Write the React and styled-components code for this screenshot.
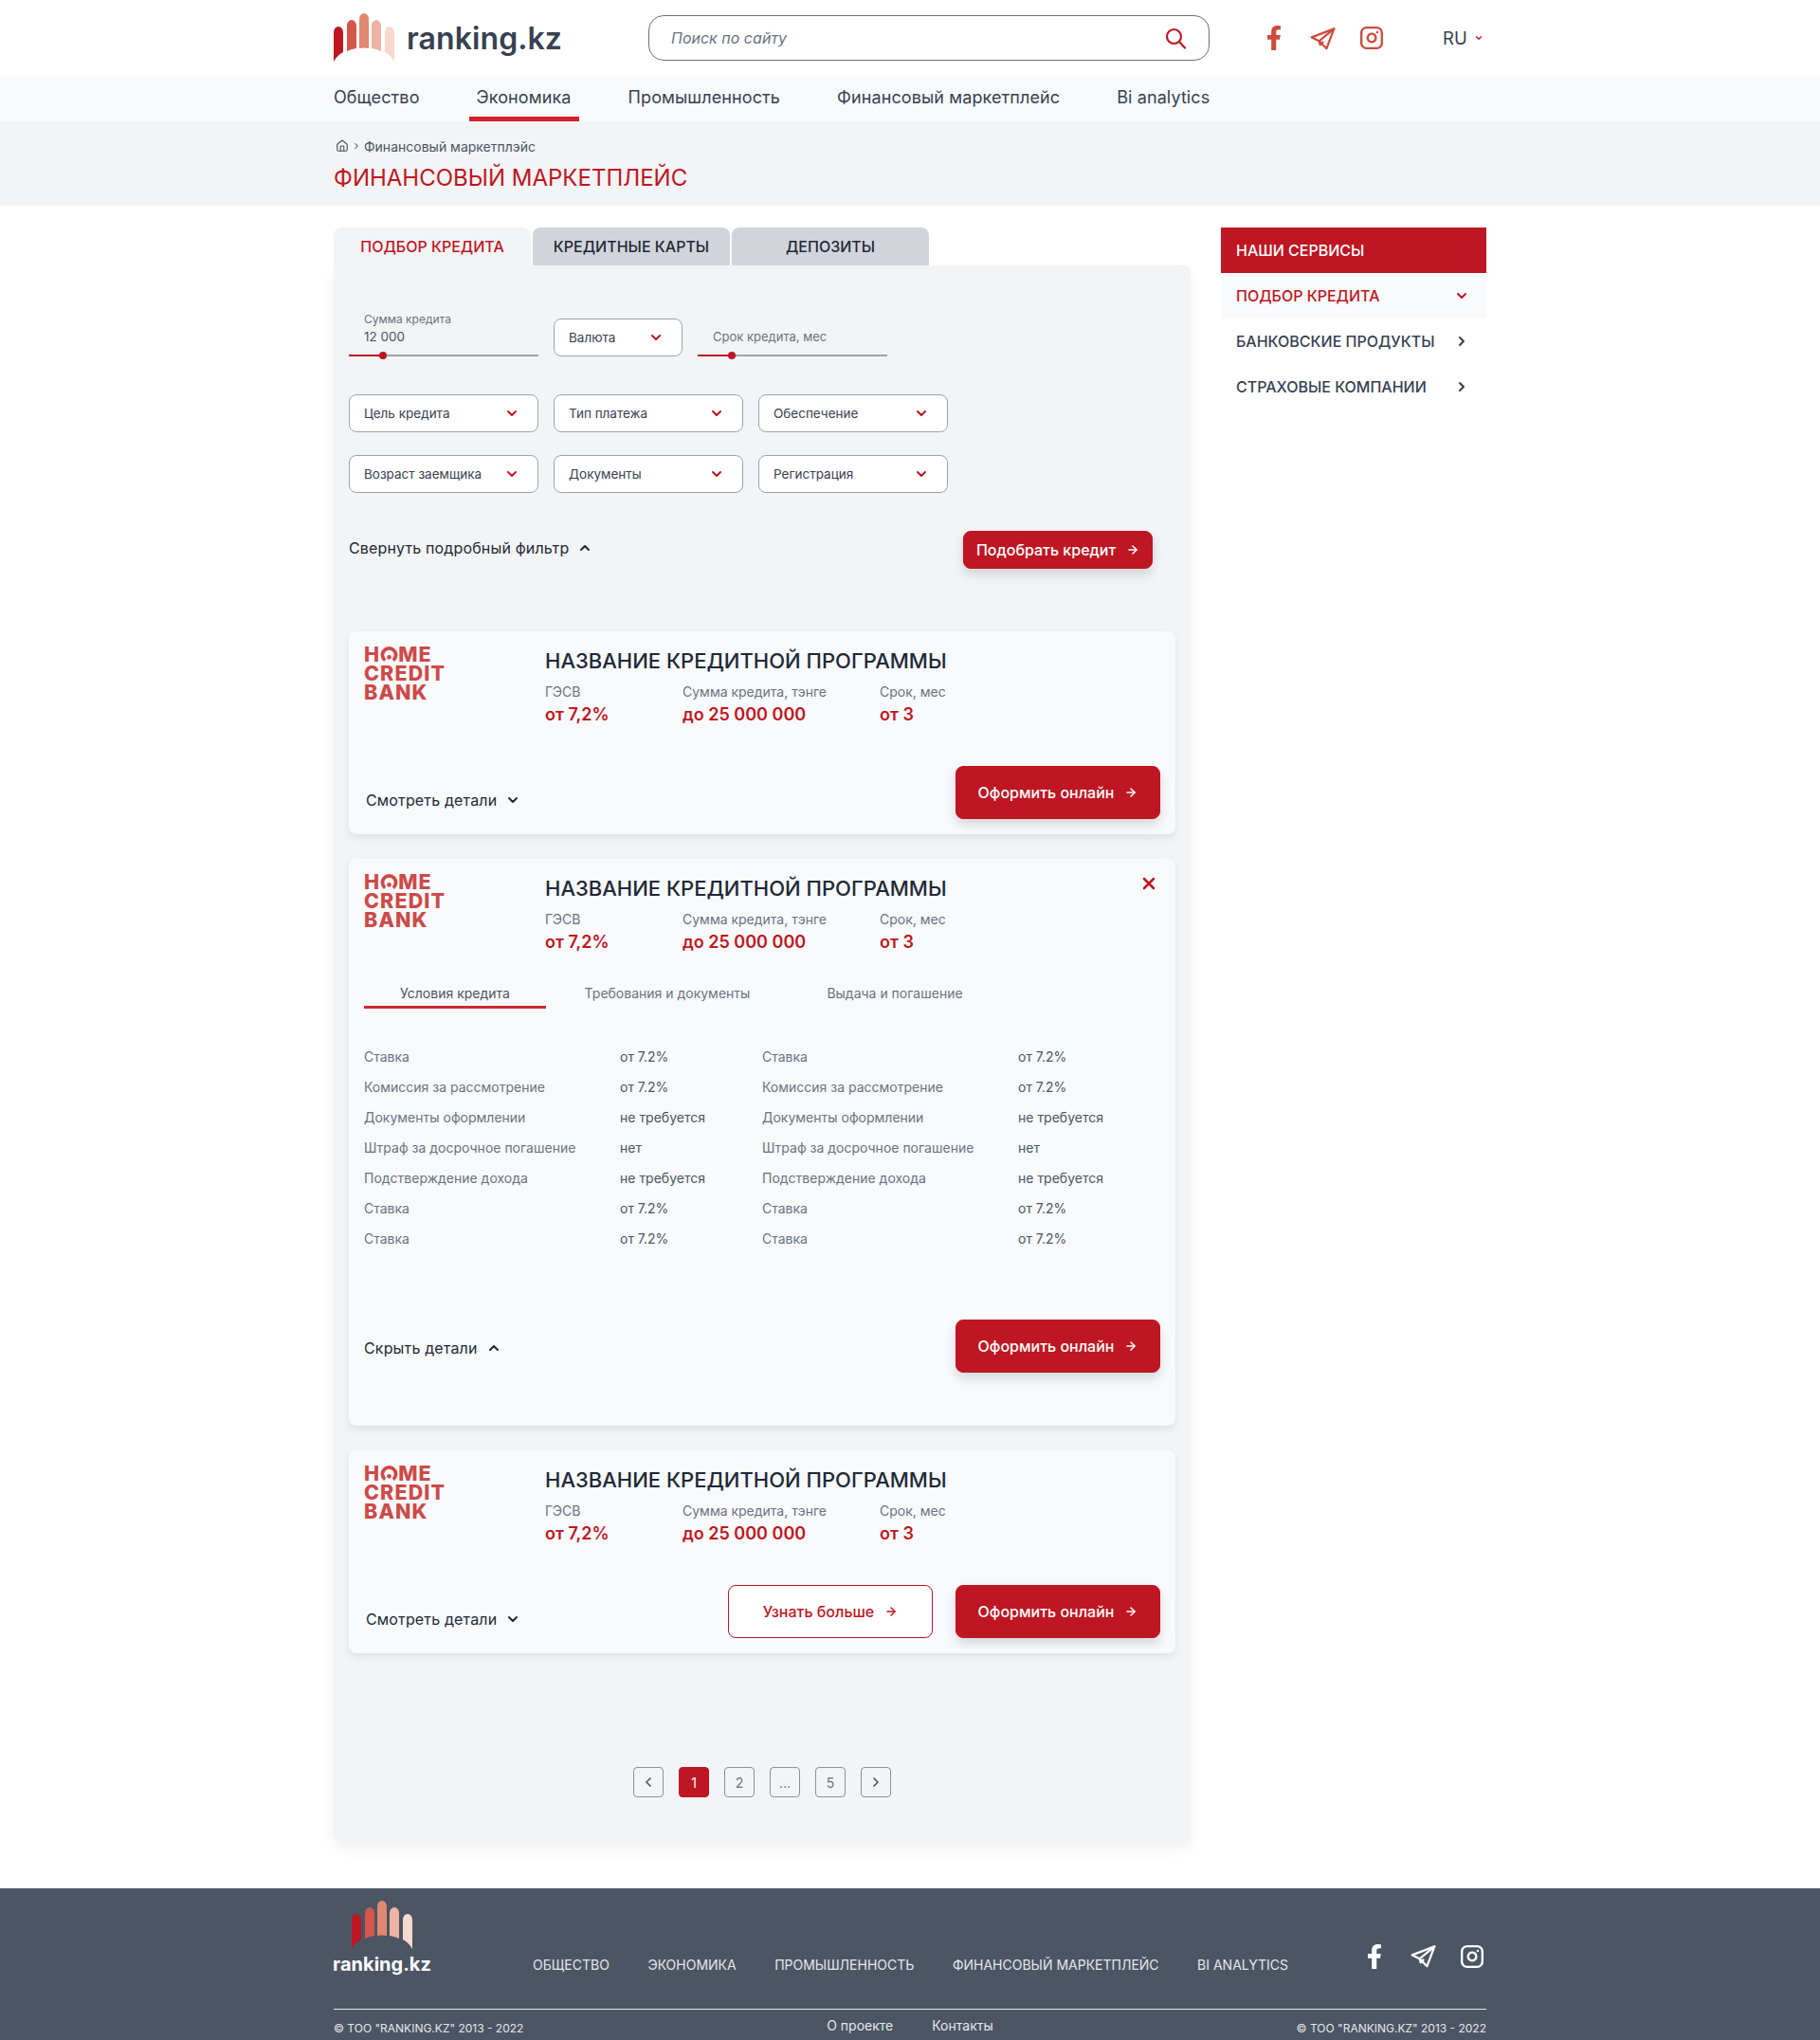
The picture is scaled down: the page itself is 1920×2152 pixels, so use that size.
import React from 'react'
import styled, { createGlobalStyle } from 'styled-components'
import { ArrowRight, ChevronDown, ChevronLeft, ChevronRight, ChevronUp, House, Instagram, X } from 'lucide-react'
import { FaFacebookF } from 'react-icons/fa'

const RED = '#be1622'

const GlobalStyle = createGlobalStyle`
  body {
    margin: 0;
    background: #fff;
    color: #374151;
    font-family: Inter, "Noto Sans", sans-serif;
  }
`

const Container = styled.div`
  width: 1216px;
  margin: 0 auto;
`

const HeaderBar = styled(Container)`
  display: flex;
  align-items: center;
  height: 80px;
`

const Brand = styled.div`
  display: flex;
  align-items: center;
  gap: 13px;
  width: 332px;
  font-size: 32px;
  font-weight: 600;
  letter-spacing: 0.1px;
  color: #374151;
`

const SearchBox = styled.div`
  display: flex;
  align-items: center;
  justify-content: space-between;
  box-sizing: border-box;
  width: 592px;
  height: 48px;
  padding: 0 23px;
  border: 1px solid #6b7280;
  border-radius: 16px;
  font-size: 16px;
  font-style: italic;
  color: #6b7280;
  svg {
    color: ${RED};
  }
`

const Socials = styled.div`
  display: flex;
  align-items: center;
  gap: 25px;
  margin-left: ${p => p.$offset}px;
  color: ${p => p.$color};
`

const Lang = styled.div`
  display: flex;
  align-items: center;
  gap: 7px;
  margin-left: 62px;
  font-size: 18.5px;
  svg {
    color: ${RED};
  }
`

const NavBand = styled.nav`
  height: 48px;
  background: #f8fafc;
`

const NavRow = styled(Container)`
  display: flex;
  gap: 44px;
  position: relative;
  left: -8px;
`

const NavItem = styled.a`
  box-sizing: border-box;
  height: 48px;
  padding: 0 8px;
  font-size: 18px;
  line-height: 46px;
  letter-spacing: 0.1px;
  color: #374151;
  border-bottom: 5px solid ${p => (p.$active ? '#d6202c' : 'transparent')};
`

const TitleBand = styled.div`
  height: 89px;
  background: #f3f4f6;
`

const Crumbs = styled.div`
  display: flex;
  align-items: center;
  gap: 3px;
  padding: 17px 0 0 2px;
  height: 18px;
  font-size: 14px;
  color: #4b5563;
`

const PageTitle = styled.h1`
  margin: 9px 0 0;
  font-size: 24px;
  line-height: 32px;
  font-weight: 400;
  color: ${RED};
  text-transform: uppercase;
`

const Main = styled(Container)`
  display: flex;
  gap: 32px;
  padding-top: 23px;
`

const LeftColumn = styled.div`
  width: 904px;
`

const Tabs = styled.div`
  display: flex;
  gap: 2px;
`

const Tab = styled.div`
  width: 208px;
  height: 40px;
  border-radius: 8px 8px 0 0;
  background: ${p => (p.$active ? '#f3f4f6' : '#d1d5db')};
  color: ${p => (p.$active ? RED : '#1f2937')};
  font-size: 16px;
  font-weight: 500;
  line-height: 40px;
  text-align: center;
`

const Panel = styled.section`
  box-sizing: border-box;
  height: 1662px;
  padding: 56px 16px 0;
  background: #f3f4f6;
  border-radius: 0 8px 8px 8px;
  box-shadow: 0 8px 16px rgba(0, 0, 0, 0.06);
`

const FilterRow = styled.div`
  display: flex;
  gap: 16px;
  height: 40px;
  margin-bottom: ${p => p.$after}px;
`

const SliderBox = styled.div`
  display: flex;
  flex-direction: column;
  justify-content: flex-end;
  width: 200px;
  height: 40px;
  & > * {
    flex-shrink: 0;
  }
`

const SliderLabel = styled.div`
  padding-left: 16px;
  font-size: 12px;
  line-height: 16px;
  color: #6b7280;
`

const SliderValue = styled.div`
  margin-bottom: 9px;
  padding-left: 16px;
  font-size: ${p => (p.$muted ? 13 : 13.500)}px;
  line-height: 20px;
  color: ${p => (p.$muted ? '#6b7280' : '#4b5563')};
`

const Track = styled.div`
  position: relative;
  height: 2px;
  background: #9ca3af;
`

const TrackFill = styled.div`
  height: 100%;
  background: ${RED};
`

const Thumb = styled.div`
  position: absolute;
  top: -3px;
  width: 8px;
  height: 8px;
  border-radius: 50%;
  background: ${RED};
`

const Select = styled.div`
  display: flex;
  align-items: center;
  justify-content: space-between;
  box-sizing: border-box;
  width: ${p => p.$width || 200}px;
  height: 40px;
  padding: 0 19px 0 15px;
  background: #fff;
  border: 1px solid #9ca3af;
  border-radius: 8px;
  font-size: 13.500px;
  color: #374151;
  svg {
    color: ${RED};
  }
`

const ActionRow = styled.div`
  display: flex;
  align-items: center;
  justify-content: space-between;
  height: 40px;
  padding-right: 24px;
`

const Toggle = styled.div`
  display: flex;
  align-items: center;
  gap: 9px;
  padding-top: ${p => p.$shift || 0}px;
  padding-bottom: ${p => p.$lift || 0}px;
  padding-left: ${p => p.$inset || 0}px;
  font-size: 16px;
  letter-spacing: 0.15px;
  color: #1f2937;
`

const Button = styled.div`
  display: flex;
  align-items: center;
  justify-content: center;
  gap: 11px;
  box-sizing: border-box;
  width: ${p => (p.$small ? 200 : 216)}px;
  height: ${p => (p.$small ? 40 : 56)}px;
  border: 1px solid ${RED};
  border-radius: 8px;
  background: ${p => (p.$outline ? '#fff' : RED)};
  color: ${p => (p.$outline ? RED : '#fff')};
  font-size: 16px;
  font-weight: 500;
  box-shadow: ${p => (p.$outline ? 'none' : '0 6px 12px rgba(0, 0, 0, 0.14)')};
`

const CardList = styled.div`
  display: flex;
  flex-direction: column;
  gap: 26px;
  margin-top: 66px;
`

const Card = styled.article`
  position: relative;
  background: #f8fafc;
  border-radius: 8px;
  box-shadow: 0 4px 8px rgba(0, 0, 0, 0.08);
`

const CardHead = styled.div`
  display: flex;
  padding: 15px 16px 0;
`

const LogoWrap = styled.div`
  width: 191px;
  margin-top: -1px;
  font-size: 21.500px;
  font-weight: 800;
  line-height: 20px;
  letter-spacing: 1.100px;
  color: #cd4a48;
`

const HomeLine = styled.div`
  display: flex;
  align-items: center;
  height: 20px;
`

const ProgramTitle = styled.h2`
  margin: 0;
  padding-top: 1px;
  height: 29px;
  font-size: 22px;
  font-weight: 500;
  line-height: 30px;
  color: #1f2937;
  white-space: nowrap;
`

const Meta = styled.div`
  display: flex;
  margin-top: 9px;
`

const MetaCol = styled.div`
  width: ${p => p.$width}px;
`

const MetaLabel = styled.div`
  font-size: 14px;
  line-height: 20px;
  color: #6b7280;
`

const MetaValue = styled.div`
  font-size: 18px;
  font-weight: 600;
  line-height: 28px;
  color: ${RED};
`

const CloseIcon = styled(X)`
  position: absolute;
  top: 16px;
  right: 18px;
  color: ${RED};
`

const CardFoot = styled.div`
  display: flex;
  align-items: flex-start;
  justify-content: space-between;
  margin-top: ${p => p.$top}px;
  padding: 0 16px ${p => p.$bottom}px;
`

const ButtonGroup = styled.div`
  display: flex;
  gap: 24px;
`

const DetailTabs = styled.div`
  display: flex;
  margin: 24px 16px 0;
`

const DetailTab = styled.div`
  box-sizing: border-box;
  width: ${p => p.$width}px;
  height: 32px;
  padding-top: 5px;
  font-size: 14px;
  line-height: 22px;
  text-align: center;
  color: ${p => (p.$active ? '#4b5563' : '#6b7280')};
  border-bottom: 3px solid ${p => (p.$active ? '#cd2a33' : 'transparent')};
`

const DetailGrid = styled.div`
  display: grid;
  grid-template-columns: 270px 150px 270px 150px;
  grid-auto-rows: 32px;
  align-items: center;
  margin: 34px 16px 0;
  font-size: 14px;
`

const DetailLabel = styled.div`
  color: #6b7280;
`

const DetailValue = styled.div`
  color: #4b5563;
`

const Pager = styled.div`
  display: flex;
  justify-content: center;
  gap: 16px;
  margin-top: 120px;
`

const PageButton = styled.div`
  display: flex;
  align-items: center;
  justify-content: center;
  box-sizing: border-box;
  width: 32px;
  height: 32px;
  border: 1px solid ${p => (p.$active ? RED : '#8b929e')};
  border-radius: 4px;
  background: ${p => (p.$active ? RED : 'transparent')};
  color: ${p => (p.$active ? '#fff' : '#6b7280')};
  font-size: 14px;
  svg {
    color: #4b5563;
  }
`

const Sidebar = styled.aside`
  width: 280px;
`

const SideItem = styled.div`
  display: flex;
  align-items: center;
  justify-content: space-between;
  height: 48px;
  padding: 0 18px 0 16px;
  font-size: 16px;
  font-weight: 500;
  background: ${p => (p.$head ? RED : p.$active ? '#f8fafc' : 'transparent')};
  color: ${p => (p.$head ? '#fff' : p.$active ? RED : '#374151')};
  svg {
    color: ${p => (p.$active ? RED : '#374151')};
  }
`

const Footer = styled.footer`
  height: 160px;
  margin-top: 50px;
  background: #4b5563;
  color: #e5e7eb;
`

const FooterTop = styled(Container)`
  display: flex;
  height: 127px;
  border-bottom: 1px solid #e5e7eb;
`

const FooterBrand = styled.div`
  display: flex;
  flex-direction: column;
  align-items: center;
  align-self: flex-start;
  width: 102px;
  margin-right: 108px;
  padding-top: 13px;
  font-size: 20px;
  font-weight: 700;
  line-height: 28px;
  color: #fff;
  svg {
    margin-bottom: 1px;
  }
`

const FooterNav = styled.nav`
  display: flex;
  gap: 40.500px;
  padding-top: 72px;
  font-size: 14px;
  line-height: 18px;
`

const FooterSocials = styled(Socials)`
  align-self: flex-start;
  margin-left: auto;
  margin-right: 2px;
  padding-top: 58px;
`

const FooterBottom = styled(Container)`
  display: grid;
  grid-template-columns: 1fr auto 1fr;
  padding-top: 10px;
  font-size: 12px;
  line-height: 20px;
`

const FooterLinks = styled.div`
  display: flex;
  gap: 41px;
  margin-top: -3px;
  font-size: 14px;
`

const Copy = styled.div`
  text-align: ${p => p.$align || 'left'};
`

function RankingLogo({ width = 64 }) {
  const height = (width * 52) / 64
  return (
    <svg width={width} height={height} viewBox="0 0 64 52">
      <path fill="#be1622" d="M0 51V20a5 6 0 0 1 10 0v21q-6 3-10 10z" />
      <path fill="#d4574a" d="M14 40V13a5 6 0 0 1 10 0v24q-6 1-10 3z" />
      <path fill="#e08872" d="M27 37V6a5 6 0 0 1 10 0v31q-5-1-10 0z" />
      <path fill="#eeb3a3" d="M40 37V13a5 6 0 0 1 10 0v27q-4-2-10-3z" />
      <path fill="#f7d9d0" d="M54 41V20a5 6 0 0 1 10 0v31q-4-7-10-10z" />
    </svg>
  )
}

function TelegramIcon() {
  return (
    <svg width="27" height="27" viewBox="0 0 24 24" fill="none" stroke="currentColor" strokeWidth="2" strokeLinejoin="round" strokeLinecap="round">
      <path d="M22.5 3 1.500 11l7 3.500 7 7z" />
      <path d="M22.5 3 8.500 14.500l1 3.500 2.500-2.500" />
    </svg>
  )
}

function SearchIcon() {
  return (
    <svg width="24" height="24" viewBox="0 0 24 24" fill="none" stroke="currentColor" strokeWidth="2.2" strokeLinecap="round">
      <circle cx="10.500" cy="10.500" r="7.500" />
      <path d="M16 16l6 6.500" />
    </svg>
  )
}

function BankLogo() {
  return (
    <LogoWrap>
      <HomeLine>
        H
        <svg width="19" height="16" viewBox="0 0 19 17">
          <path fill="none" stroke="currentColor" strokeWidth="4" d="M5 15.500A7.500 7.500 0 1 1 14 15.500" />
          <circle cx="9.500" cy="12" r="2.500" fill="currentColor" />
        </svg>
        ME
      </HomeLine>
      <div>CREDIT</div>
      <div>BANK</div>
    </LogoWrap>
  )
}

function ProgramHead() {
  return (
    <CardHead>
      <BankLogo />
      <div>
        <ProgramTitle>НАЗВАНИЕ КРЕДИТНОЙ ПРОГРАММЫ</ProgramTitle>
        <Meta>
          <MetaCol $width={145}>
            <MetaLabel>ГЭСВ</MetaLabel>
            <MetaValue>от 7,2%</MetaValue>
          </MetaCol>
          <MetaCol $width={208}>
            <MetaLabel>Сумма кредита, тэнге</MetaLabel>
            <MetaValue>до 25 000 000</MetaValue>
          </MetaCol>
          <MetaCol $width={80}>
            <MetaLabel>Срок, мес</MetaLabel>
            <MetaValue>от 3</MetaValue>
          </MetaCol>
        </Meta>
      </div>
    </CardHead>
  )
}

function ApplyButton() {
  return (
    <Button>
      Оформить онлайн
      <ArrowRight size={14} strokeWidth={2.5} />
    </Button>
  )
}

const filterRows = [
  ['Цель кредита', 'Тип платежа', 'Обеспечение'],
  ['Возраст заемщика', 'Документы', 'Регистрация'],
]

const details = [
  ['Ставка', 'от 7.2%'],
  ['Комиссия за рассмотрение', 'от 7.2%'],
  ['Документы оформлении', 'не требуется'],
  ['Штраф за досрочное погашение', 'нет'],
  ['Подстверждение дохода', 'не требуется'],
  ['Ставка', 'от 7.2%'],
  ['Ставка', 'от 7.2%'],
]

const navItems = ['Общество', 'Экономика', 'Промышленность', 'Финансовый маркетплейс', 'Bi analytics']

export default function App() {
  return (
    <>
      <GlobalStyle />
      <HeaderBar>
        <Brand>
          <RankingLogo />
          ranking.kz
        </Brand>
        <SearchBox>
          Поиск по сайту
          <SearchIcon />
        </SearchBox>
        <Socials $offset={55} $color="#cd4b3e">
          <FaFacebookF size={26} />
          <TelegramIcon />
          <Instagram size={26} strokeWidth={2.2} />
        </Socials>
        <Lang>
          RU
          <ChevronDown size={10} strokeWidth={3} />
        </Lang>
      </HeaderBar>

      <NavBand>
        <NavRow>
          {navItems.map(item => (
            <NavItem key={item} $active={item === 'Экономика'}>{item}</NavItem>
          ))}
        </NavRow>
      </NavBand>

      <TitleBand>
        <Container>
          <Crumbs>
            <House size={14} />
            <ChevronRight size={10} strokeWidth={2.5} />
            <span>Финансовый маркетплэйс</span>
          </Crumbs>
          <PageTitle>Финансовый маркетплейс</PageTitle>
        </Container>
      </TitleBand>

      <Main>
        <LeftColumn>
          <Tabs>
            <Tab $active>ПОДБОР КРЕДИТА</Tab>
            <Tab>КРЕДИТНЫЕ КАРТЫ</Tab>
            <Tab>ДЕПОЗИТЫ</Tab>
          </Tabs>
          <Panel>
            <FilterRow $after={40}>
              <SliderBox>
                <SliderLabel>Сумма кредита</SliderLabel>
                <SliderValue>12 000</SliderValue>
                <Track>
                  <TrackFill style={{ width: 36 }} />
                  <Thumb style={{ left: 32 }} />
                </Track>
              </SliderBox>
              <Select $width={136}>
                Валюта
                <ChevronDown size={16} strokeWidth={3} />
              </Select>
              <SliderBox>
                <SliderValue $muted>Срок кредита, мес</SliderValue>
                <Track>
                  <TrackFill style={{ width: 36 }} />
                  <Thumb style={{ left: 32 }} />
                </Track>
              </SliderBox>
            </FilterRow>
            {filterRows.map((row, i) => (
              <FilterRow key={row[0]} $after={i === 0 ? 24 : 40}>
                {row.map(name => (
                  <Select key={name}>
                    {name}
                    <ChevronDown size={16} strokeWidth={3} />
                  </Select>
                ))}
              </FilterRow>
            ))}
            <ActionRow>
              <Toggle $lift={4}>
                Свернуть подробный фильтр
                <ChevronUp size={16} strokeWidth={3} />
              </Toggle>
              <Button $small>
                Подобрать кредит
                <ArrowRight size={14} strokeWidth={2.5} />
              </Button>
            </ActionRow>

            <CardList>
              <Card>
                <ProgramHead />
                <CardFoot $top={40} $bottom={16}>
                  <Toggle $shift={26} $inset={2}>
                    Смотреть детали
                    <ChevronDown size={16} strokeWidth={3} />
                  </Toggle>
                  <ApplyButton />
                </CardFoot>
              </Card>

              <Card>
                <CloseIcon size={20} strokeWidth={3} />
                <ProgramHead />
                <DetailTabs>
                  <DetailTab $active $width={192}>Условия кредита</DetailTab>
                  <DetailTab $width={256}>Требования и документы</DetailTab>
                  <DetailTab $width={224}>Выдача и погашение</DetailTab>
                </DetailTabs>
                <DetailGrid>
                  {details.map(([label, value], i) => (
                    <React.Fragment key={i}>
                      <DetailLabel>{label}</DetailLabel>
                      <DetailValue>{value}</DetailValue>
                      <DetailLabel>{label}</DetailLabel>
                      <DetailValue>{value}</DetailValue>
                    </React.Fragment>
                  ))}
                </DetailGrid>
                <CardFoot $top={70} $bottom={56}>
                  <Toggle $shift={20}>
                    Скрыть детали
                    <ChevronUp size={16} strokeWidth={3} />
                  </Toggle>
                  <ApplyButton />
                </CardFoot>
              </Card>

              <Card>
                <ProgramHead />
                <CardFoot $top={40} $bottom={16}>
                  <Toggle $shift={26} $inset={2}>
                    Смотреть детали
                    <ChevronDown size={16} strokeWidth={3} />
                  </Toggle>
                  <ButtonGroup>
                    <Button $outline>
                      Узнать больше
                      <ArrowRight size={14} strokeWidth={2.5} />
                    </Button>
                    <ApplyButton />
                  </ButtonGroup>
                </CardFoot>
              </Card>
            </CardList>

            <Pager>
              <PageButton><ChevronLeft size={16} strokeWidth={2.5} /></PageButton>
              <PageButton $active>1</PageButton>
              <PageButton>2</PageButton>
              <PageButton>...</PageButton>
              <PageButton>5</PageButton>
              <PageButton><ChevronRight size={16} strokeWidth={2.5} /></PageButton>
            </Pager>
          </Panel>
        </LeftColumn>

        <Sidebar>
          <SideItem $head>НАШИ СЕРВИСЫ</SideItem>
          <SideItem $active>
            ПОДБОР КРЕДИТА
            <ChevronDown size={16} strokeWidth={3} />
          </SideItem>
          <SideItem>
            БАНКОВСКИЕ ПРОДУКТЫ
            <ChevronRight size={16} strokeWidth={3} />
          </SideItem>
          <SideItem>
            СТРАХОВЫЕ КОМПАНИИ
            <ChevronRight size={16} strokeWidth={3} />
          </SideItem>
        </Sidebar>
      </Main>

      <Footer>
        <FooterTop>
          <FooterBrand>
            <RankingLogo />
            ranking.kz
          </FooterBrand>
          <FooterNav>
            <span>ОБЩЕСТВО</span>
            <span>ЭКОНОМИКА</span>
            <span>ПРОМЫШЛЕННОСТЬ</span>
            <span>ФИНАНСОВЫЙ МАРКЕТПЛЕЙС</span>
            <span>BI ANALYTICS</span>
          </FooterNav>
          <FooterSocials $color="#fff">
            <FaFacebookF size={26} />
            <TelegramIcon />
            <Instagram size={26} strokeWidth={2.2} />
          </FooterSocials>
        </FooterTop>
        <FooterBottom>
          <Copy>© ТОО "RANKING.KZ" 2013 - 2022</Copy>
          <FooterLinks>
            <span>О проекте</span>
            <span>Контакты</span>
          </FooterLinks>
          <Copy $align="right">© ТОО "RANKING.KZ" 2013 - 2022</Copy>
        </FooterBottom>
      </Footer>
    </>
  )
}
